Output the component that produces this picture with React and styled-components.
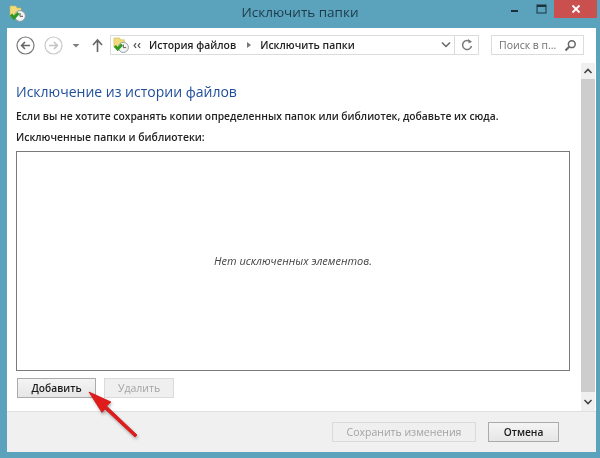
import React from 'react';
import styled, { createGlobalStyle } from 'styled-components';

const Global = createGlobalStyle`
  html, body { margin: 0; padding: 0; background: #5ba3bd; }
  * { box-sizing: border-box; }
`;

const Frame = styled.div`
  width: 600px; height: 458px; background: #5ba3bd; overflow: hidden;
  display: flex; flex-direction: column; padding: 0 4px 6px 7px;
  font-family: "Open Sans", "Noto Sans", sans-serif; color: #1a1a1a;
  filter: blur(0.35px);
`;
const TitleBar = styled.div`
  height: 28px; flex: none; display: flex; align-items: center; position: relative;
`;
const TitleIcon = styled.div`
  width: 17px; height: 17px; margin-left: 2px; margin-top: -2px; flex: none;
`;
const Title = styled.div`
  position: absolute; left: -3px; right: 0; top: 2px; text-align: center; font-size: 13.5px; line-height: 20px;
  color: #1d3a4a;
`;
const WindowControls = styled.div`
  position: absolute; right: -1px; top: 0; display: flex; align-items: flex-start;
`;
const Ctl = styled.div`
  width: 26px; height: 18px; display: flex; align-items: center; justify-content: center;
`;
const Close = styled.div`
  width: 43px; height: 18px; background: #c9504f; display: flex; align-items: center; justify-content: center;
`;
const Body = styled.div`
  flex: 1; background: #fff; display: flex; flex-direction: column; min-height: 0;
`;
const NavBar = styled.div`
  height: 20px; margin: 7px 0 8px; display: flex; align-items: center; flex: none; padding-left: 9px;
`;
const NavBtn = styled.div`
  width: 19px; height: 19px; flex: none; margin-right: ${p => p.$mr || 0}px;
`;
const AddressBox = styled.div`
  width: 345px; height: 20px; margin-left: 3px; border: 1px solid #dcdcdc; display: flex; align-items: center; font-size: 10.4px; font-weight: 600; color: #222; padding-left: 2px;
`;
const Crumb = styled.span`
  white-space: nowrap; margin-left: ${p => p.$ml || 0}px;
`;
const Chevrons = styled.span`
  color: #555; margin-left: 4px; font-weight: 600; font-size: 12px; line-height: 12px;
`;
const Sep = styled.span`
  width: 0; height: 0; border-left: 4px solid #777; border-top: 3px solid transparent; border-bottom: 3px solid transparent; margin-left: 11px;
`;
const Grow = styled.div`flex: 1;`;
const Refresh = styled.div`
  width: 24px; height: 20px; border: 1px solid #dcdcdc; border-left: 0; display: flex; align-items: center; justify-content: center;
`;
const Search = styled.div`
  width: 93px; height: 20px; margin-left: 12px; border: 1px solid #dcdcdc; display: flex; align-items: center; justify-content: space-between; padding: 0 6px 0 7px; font-size: 10.5px; color: #707070; white-space: nowrap;
`;
const Content = styled.div`
  flex: 1; display: flex; min-height: 0;
`;
const Main = styled.div`
  flex: 1; padding: 19px 0 0 9px; display: flex; flex-direction: column; min-width: 0;
`;
const Heading = styled.div`
  font-size: 14px; line-height: 20px; color: #1e4d9b;
`;
const Para = styled.div`
  font-size: ${p => p.$fs}px; line-height: 14px; margin-top: 7px; font-weight: 600; color: #222; white-space: nowrap;
`;
const ListBox = styled.div`
  width: 554px; height: 220px; margin-top: 7px; border: 1px solid #7a7a7a; display: flex; align-items: center; justify-content: center;
  font-size: 11px; font-style: italic; color: #444; padding-bottom: 1px;
`;
const BtnRow = styled.div`
  display: flex; gap: 8px; margin-top: 7px; margin-left: 1px;
`;
const Btn = styled.div`
  height: 20px; width: ${p => p.$w}px; border: 1px solid ${p => p.$off ? '#dadada' : '#ababab'};
  background: ${p => p.$off ? '#efefef' : 'linear-gradient(#f4f4f4,#e6e6e6)'};
  color: ${p => p.$off ? '#a3a3a3' : '#1a1a1a'}; font-size: ${p => p.$off ? 10.5 : 10.2}px; font-weight: ${p => p.$off ? 400 : 600}; display: flex; align-items: center; justify-content: center; white-space: nowrap;
`;
const Scrollbar = styled.div`
  width: 14px; flex: none; margin-right: 1px; background: #f0f0f0; display: flex; flex-direction: column; align-items: center;
`;
const Arrow = styled.div`
  height: ${p => p.$h}px; width: 100%; display: flex; align-items: center; justify-content: center; flex: none;
`;
const Thumb = styled.div`
  flex: 1; width: 100%; background: #cdcdcd;
`;
const Footer = styled.div`
  height: 41px; flex: none; background: #f0f0f0; border-top: 1px solid #dfdfdf; display: flex; justify-content: flex-end; align-items: flex-start; gap: 12px; padding: 10px 37px 0 0;
`;
const ArrowOverlay = styled.svg`
  position: absolute; left: 85px; top: 388px; width: 60px; height: 56px; pointer-events: none;
  filter: drop-shadow(1px 2px 1.5px rgba(0,0,0,.3));
`;
const Stage = styled.div`position: relative; width: 600px; height: 458px;`;

const HistoryIcon = ({ size = 17 }) => (
  <svg width={size} height={size} viewBox="0 0 17 17">
    <path d="M1 1h6l1 2h4v8H1z" fill="#f2dc7a" stroke="#c9b25a" strokeWidth=".6" />
    <circle cx="11" cy="11" r="5.4" fill="#f4f4f4" stroke="#8d9aa0" />
    <path d="M11 8v3.3h3" fill="none" stroke="#555" strokeWidth="1" />
    <path d="M2 9.5 5 13 9.5 8" fill="none" stroke="#2f9a1d" strokeWidth="3" />
  </svg>
);

export default function App() {
  return (
    <Stage>
      <Global />
      <Frame>
        <TitleBar>
          <TitleIcon><HistoryIcon /></TitleIcon>
          <Title>Исключить папки</Title>
          <WindowControls>
            <Ctl>
              <svg width="10" height="10" viewBox="0 0 10 10"><rect x="1" y="6" width="7" height="2" fill="#1c2f38" /></svg>
            </Ctl>
            <Ctl>
              <svg width="11" height="10" viewBox="0 0 11 10"><rect x="1" y="1" width="9" height="8" fill="none" stroke="#1c3340" strokeWidth="1" /><rect x="1" y="1" width="9" height="2" fill="#1c3340" /></svg>
            </Ctl>
            <Close>
              <svg width="10" height="10" viewBox="0 0 10 10"><path d="M1.5 1.5l7 7M8.5 1.5l-7 7" stroke="#fff" strokeWidth="1.8" /></svg>
            </Close>
          </WindowControls>
        </TitleBar>
        <Body>
          <NavBar>
            <NavBtn $mr={9}>
              <svg width="19" height="19" viewBox="0 0 19 19"><circle cx="9.5" cy="9.5" r="8.5" fill="none" stroke="#777" strokeWidth="1.2" /><path d="M14 9.5H6M9 6l-3.4 3.5L9 13" fill="none" stroke="#666" strokeWidth="1.6" /></svg>
            </NavBtn>
            <NavBtn $mr={4}>
              <svg width="19" height="19" viewBox="0 0 19 19"><circle cx="9.5" cy="9.5" r="8.5" fill="none" stroke="#c8c8c8" strokeWidth="1.2" /><path d="M5 9.5h8M10 6l3.4 3.5L10 13" fill="none" stroke="#c4c4c4" strokeWidth="1.6" /></svg>
            </NavBtn>
            <NavBtn $mr={2}>
              <svg width="19" height="19" viewBox="0 0 19 19"><path d="M5.5 8h7l-3.5 3.5z" fill="#808080" /></svg>
            </NavBtn>
            <NavBtn>
              <svg width="19" height="19" viewBox="0 0 19 19"><path d="M9.5 16V4M5 9l4.5-5L14 9" fill="none" stroke="#666" strokeWidth="1.6" /></svg>
            </NavBtn>
            <AddressBox>
              <HistoryIcon size={16} />
              <Chevrons>‹‹</Chevrons>
              <Crumb $ml={8}>История файлов</Crumb>
              <Sep />
              <Crumb $ml={9}>Исключить папки</Crumb>
              <Grow />
              <svg width="12" height="10" viewBox="0 0 12 10" style={{ marginRight: 2 }}><path d="M2 2.5l4 4 4-4" fill="none" stroke="#666" strokeWidth="1.5" /></svg>
            </AddressBox>
            <Refresh>
              <svg width="14" height="14" viewBox="0 0 14 14"><path d="M10.6 4.2A4.5 4.5 0 1 0 11.5 8" fill="none" stroke="#7a7a7a" strokeWidth="1.5" /><path d="M8 1l.6 4.2L12 3.8z" fill="#7a7a7a" /></svg>
            </Refresh>
            <Search>
              <span>Поиск в п...</span>
              <svg width="13" height="13" viewBox="0 0 13 13"><circle cx="7.8" cy="5.2" r="3.4" fill="none" stroke="#666" strokeWidth="1.5" /><path d="M5.2 7.8 1.5 11.5" stroke="#666" strokeWidth="2" /></svg>
            </Search>
          </NavBar>
          <Content>
            <Main>
              <Heading>Исключение из истории файлов</Heading>
              <Para $fs={10.3}>Если вы не хотите сохранять копии определенных папок или библиотек, добавьте их сюда.</Para>
              <Para $fs={10.4}>Исключенные папки и библиотеки:</Para>
              <ListBox>Нет исключенных элементов.</ListBox>
              <BtnRow>
                <Btn $w={79}>Добавить</Btn>
                <Btn $w={70} $off>Удалить</Btn>
              </BtnRow>
            </Main>
            <Scrollbar>
              <Arrow $h={16}><svg width="10" height="8" viewBox="0 0 10 8"><path d="M1.5 6 5 2.5 8.5 6" fill="none" stroke="#444" strokeWidth="1.6" /></svg></Arrow>
              <Thumb />
              <Arrow $h={19}><svg width="10" height="8" viewBox="0 0 10 8"><path d="M1.5 2 5 5.5 8.5 2" fill="none" stroke="#444" strokeWidth="1.6" /></svg></Arrow>
            </Scrollbar>
          </Content>
          <Footer>
            <Btn $w={144} $off>Сохранить изменения</Btn>
            <Btn $w={71}>Отмена</Btn>
          </Footer>
        </Body>
      </Frame>
      <ArrowOverlay viewBox="0 0 60 56">
        <path d="M4 4 L26 14 L21.5 18 L52 47 L50 49 L20 21 L17 24.5 Z" fill="#e01b1b" stroke="#d01515" strokeWidth=".8" />
      </ArrowOverlay>
    </Stage>
  );
}
